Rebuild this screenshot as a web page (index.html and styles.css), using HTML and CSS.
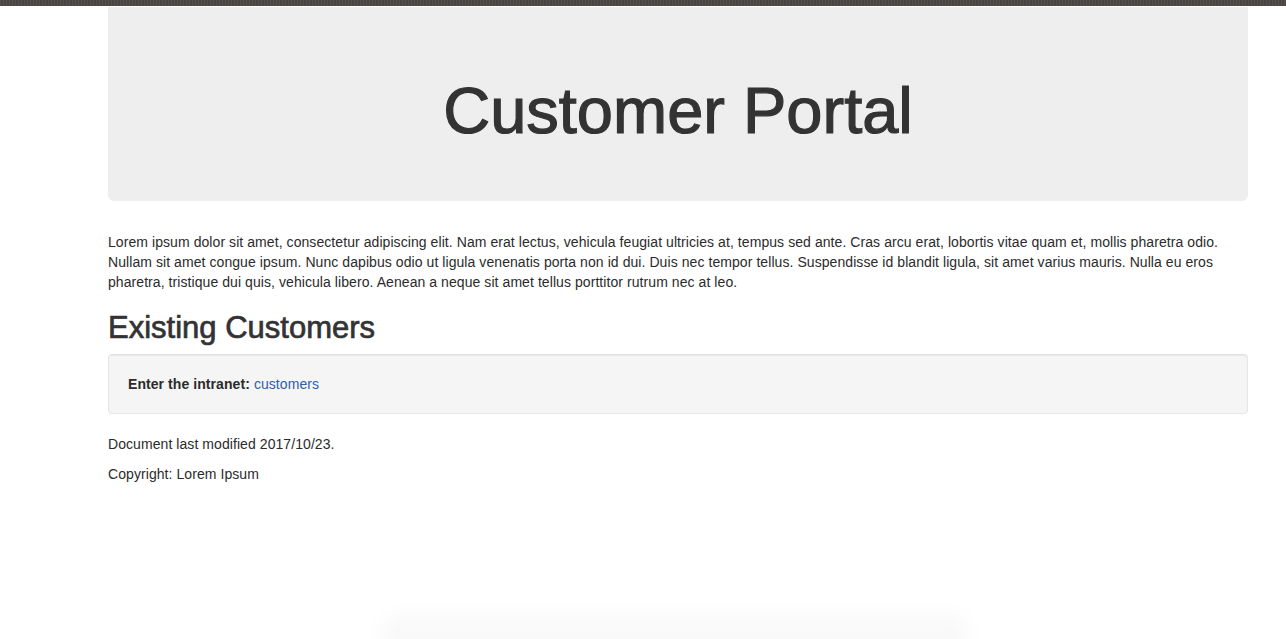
FILE: index.html
```html
<!DOCTYPE html>
<html lang="en">
<head>
<meta charset="utf-8">
<title>Customer Portal</title>
<link rel="stylesheet" href="styles.css">
</head>
<body>
<div class="topbar"></div>
<div class="container">
  <div class="jumbotron">
    <h1>Customer Portal</h1>
  </div>
  <p>Lorem ipsum dolor sit amet, consectetur adipiscing elit. Nam erat lectus, vehicula feugiat ultricies at, tempus sed ante. Cras arcu erat, lobortis vitae quam et, mollis pharetra odio. Nullam sit amet congue ipsum. Nunc dapibus odio ut ligula venenatis porta non id dui. Duis nec tempor tellus. Suspendisse id blandit ligula, sit amet varius mauris. Nulla eu eros pharetra, tristique dui quis, vehicula libero. Aenean a neque sit amet tellus porttitor rutrum nec at leo.</p>
  <h2>Existing Customers</h2>
  <div class="well"><strong>Enter the intranet:</strong> <a href="#">customers</a></div>
  <p>Document last modified 2017/10/23.</p>
  <p>Copyright: Lorem Ipsum</p>
</div>
<div class="bottom-shadow"></div>
</body>
</html>
```

FILE: styles.css
```css
html, body {
  margin: 0;
  padding: 0;
  background: #fff;
}
body {
  font-family: "Liberation Sans", Arial, Helvetica, sans-serif;
  font-size: 14px;
  line-height: 20px;
  color: #2b2b2b;
  letter-spacing: 0.07px;
  overflow: hidden;
  height: 639px;
}
.topbar {
  height: 6px;
  background-color: #4a4340;
  background-image: repeating-linear-gradient(90deg, rgba(255,255,255,0.08) 0 1px, transparent 1px 3px);
}
.container {
  width: 1140px;
  margin-left: 108px;
  padding-top: 1px;
}
.jumbotron {
  background: #eee;
  border-radius: 0 0 6px 6px;
  padding: 68px 60px 54px;
  margin-bottom: 31px;
  text-align: center;
}
.jumbotron h1 {
  margin: 0;
  font-size: 65px;
  line-height: 1.1;
  font-weight: 400;
  letter-spacing: 0;
  color: #333;
  -webkit-text-stroke: 1.2px #333;
}
p {
  margin: 0 0 10px;
}
h2 {
  font-size: 31px;
  line-height: 1.1;
  font-weight: 400;
  letter-spacing: 0;
  margin: 19px 0 9px;
  color: #333;
  -webkit-text-stroke: 0.7px #333;
}
.well {
  min-height: 20px;
  padding: 19px;
  margin-bottom: 20px;
  background: #f5f5f5;
  border: 1px solid #e6e6e6;
  border-top-color: #e0e0e0;
  border-radius: 4px;
  box-shadow: inset 0 1px 1px rgba(0,0,0,0.05);
}
.well strong {
  font-weight: 700;
}
a {
  color: #2f5fa6;
  text-decoration: none;
}
.bottom-shadow {
  position: fixed;
  left: 380px;
  width: 590px;
  bottom: -18px;
  height: 44px;
  border-radius: 40px;
  background: rgba(0,0,0,0.022);
  filter: blur(9px);
}
```
